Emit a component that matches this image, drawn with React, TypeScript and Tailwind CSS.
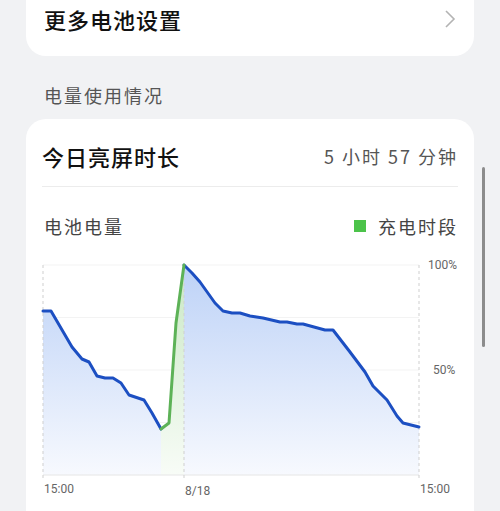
import React from 'react';

const cjk = "font-['Noto_Sans_CJK_SC','Noto_Sans',sans-serif]";

// 电量曲线 (page coordinates)
const before: [number, number][] = [
    [43, 311], [51, 311], [72, 347], [82, 359], [89, 362], [97, 376], [105, 378],
    [113, 378], [121, 383], [129, 395], [144, 400], [152, 413], [161, 429],
];
const charge: [number, number][] = [[161, 429], [169, 423], [176, 323], [184, 265]];
const after: [number, number][] = [
    [184, 265], [192, 273], [200, 282], [215, 303], [223, 311], [232, 313], [240, 313],
    [250, 316], [263, 318], [280, 322], [287, 322], [297, 324], [303, 324], [325, 330],
    [333, 330], [350, 352], [365, 372], [373, 386], [387, 400], [397, 416], [403, 423],
    [419, 427],
];

const BASE = 475;

const line = (pts: [number, number][]) => pts.map(([x, y], i) => `${i ? 'L' : 'M'}${x} ${y}`).join(' ');
const area = (pts: [number, number][]) =>
    `${line(pts)} L${pts[pts.length - 1][0]} ${BASE} L${pts[0][0]} ${BASE} Z`;

const BatteryChart = () => (
    <svg width="447" height="261" viewBox="26 250 447 261" className="block">
        <defs>
            <linearGradient id="blueFill" x1="0" y1="265" x2="0" y2="475" gradientUnits="userSpaceOnUse">
                <stop offset="0" stopColor="#bdd2f7" />
                <stop offset="1" stopColor="#f7f9fe" />
            </linearGradient>
            <linearGradient id="greenFill" x1="0" y1="265" x2="0" y2="475" gradientUnits="userSpaceOnUse">
                <stop offset="0" stopColor="#c9e8c4" />
                <stop offset="1" stopColor="#f8fcf7" />
            </linearGradient>
        </defs>

        {[265, 317.5, 370, 422.5].map((y) => (
            <line key={y} x1="43" x2="419" y1={y} y2={y} stroke="#f3f3f3" strokeWidth="1" />
        ))}

        <path d={area(before)} fill="url(#blueFill)" />
        <path d={area(after)} fill="url(#blueFill)" />
        <path d={area(charge)} fill="url(#greenFill)" />

        <line x1="43" x2="419" y1={BASE} y2={BASE} stroke="#e6e6e6" strokeWidth="1" />
        {[43, 184, 419].map((x) => (
            <line key={x} x1={x} x2={x} y1="265" y2="480" stroke="#cfcfcf" strokeWidth="1" strokeDasharray="3 3" />
        ))}

        <path d={line(before)} fill="none" stroke="#1c4fc2" strokeWidth="3" strokeLinejoin="round" strokeLinecap="round" />
        <path d={line(after)} fill="none" stroke="#1c4fc2" strokeWidth="3" strokeLinejoin="round" strokeLinecap="round" />
        <path d={line(charge)} fill="none" stroke="#5db257" strokeWidth="3" strokeLinejoin="round" strokeLinecap="round" />

        <g fill="#666" fontSize="12" fontFamily="Roboto, 'Liberation Sans', sans-serif">
            <text x="428" y="269">100%</text>
            <text x="433" y="374">50%</text>
            <text x="44" y="493">15:00</text>
            <text x="185" y="495">8/18</text>
            <text x="420" y="493">15:00</text>
        </g>
    </svg>
);

export default function App() {
    return (
        <div className={`relative h-[511px] w-[500px] overflow-hidden bg-[#f1f2f4] ${cjk}`}>
            {/* 更多电池设置 */}
            <div className="mx-[26px] -mt-[20px] flex h-[76px] items-center justify-between rounded-[20px] bg-white pl-[18px] pr-[18px] pt-[2px]">
                <span className="text-[22px] leading-[26px] font-medium tracking-[1px] text-[#111]">更多电池设置</span>
                <svg width="12" height="18" viewBox="0 0 12 18">
                    <polyline points="2,1 10,9 2,17" fill="none" stroke="#b3b3b3" strokeWidth="1.6" />
                </svg>
            </div>

            <div className="ml-[44px] mt-[27px] mb-[12px] text-[18px] leading-[24px] tracking-[2px] text-[#555]">
                电量使用情况
            </div>

            <div className="mx-[26px] rounded-t-[20px] bg-white">
                <div className="flex items-center justify-between px-[16px] pt-[24px]">
                    <span className="text-[22px] leading-[26px] font-medium tracking-[1px] text-[#111]">今日亮屏时长</span>
                    <span className="text-[18px] leading-[26px] tracking-[2px] text-[#555]">5 小时 57 分钟</span>
                </div>
                <div className="mx-[16px] mt-[17px] border-t border-[#ececec]" />
                <div className="mt-[27px] flex items-center justify-between pl-[18px] pr-[16px]">
                    <span className="text-[18px] leading-[24px] tracking-[2px] text-[#444]">电池电量</span>
                    <div className="flex items-center gap-[12px]">
                        <span className="h-[12px] w-[12px] bg-[#4cc34a]" />
                        <span className="text-[18px] leading-[24px] tracking-[2px] text-[#444]">充电时段</span>
                    </div>
                </div>
                <div className="mt-[12px]">
                    <BatteryChart />
                </div>
            </div>

            {/* scrollbar */}
            <div className="absolute left-[482px] top-[167px] h-[180px] w-[3px] rounded-full bg-[#8c8c8c]" />
        </div>
    );
}
